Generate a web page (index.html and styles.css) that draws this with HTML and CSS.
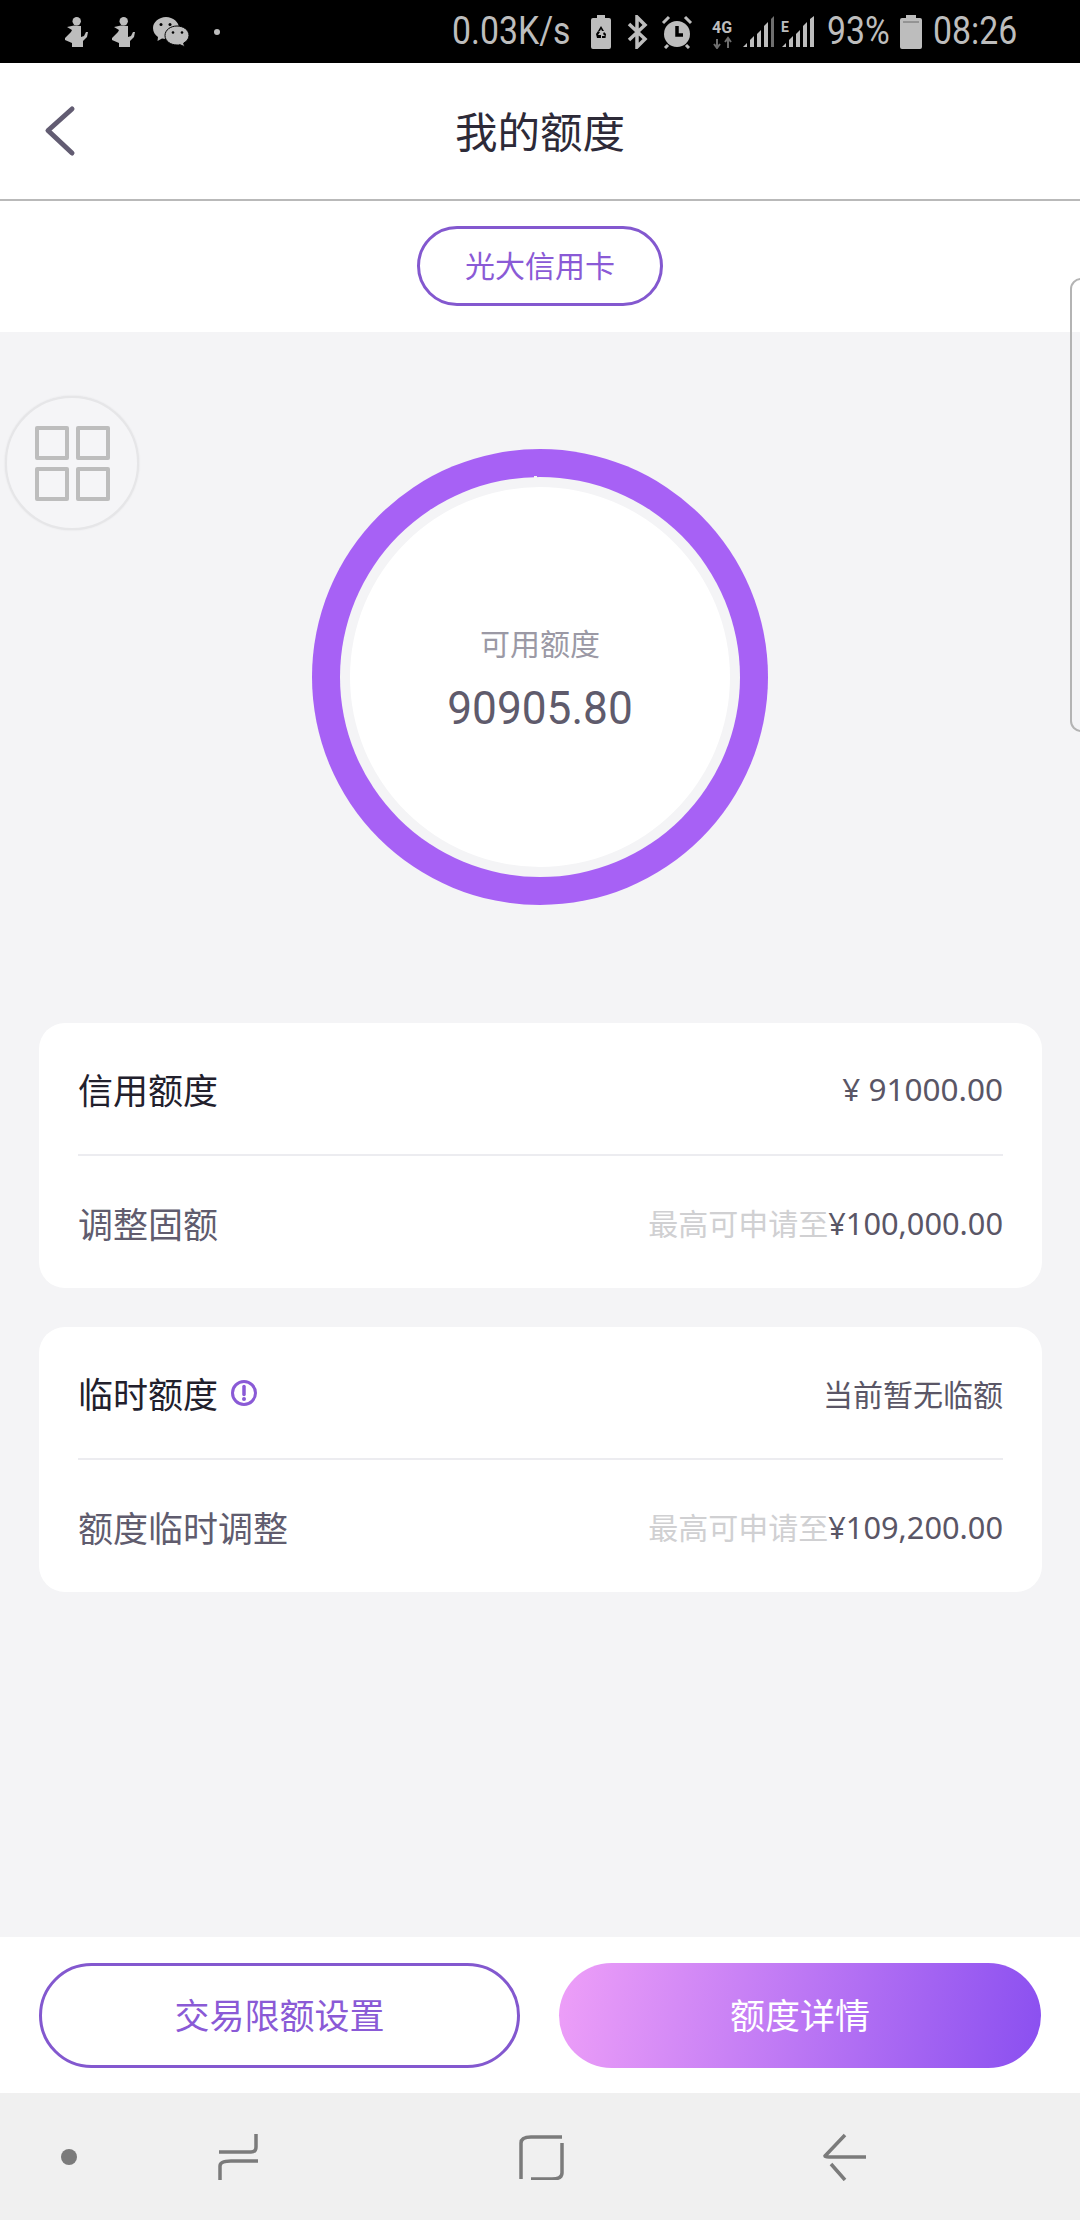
FILE: index.html
```html
<!DOCTYPE html>
<html lang="zh-CN">

<head>
    <meta charset="UTF-8">
    <meta name="viewport" content="width=device-width, initial-scale=1.0">
    <title>我的额度</title>
    <link rel="stylesheet" href="styles.css">
</head>

<body>
    <div id="page">
        <!-- status bar -->
        <div id="status-bar">
            <svg class="st-fig" width="24" height="30" viewBox="0 0 24 30"><circle cx="12.700" cy="4.200" r="4.200"/><path d="M10 8.500 3 10l5 3-1 2-6 6v2l7 3v4h11v-6l4-4 1-5h-2l-2 4-3 1V9Z"/></svg>
            <svg class="st-fig st-fig2" width="24" height="30" viewBox="0 0 24 30"><circle cx="12.700" cy="4.200" r="4.200"/><path d="M10 8.500 3 10l5 3-1 2-6 6v2l7 3v4h11v-6l4-4 1-5h-2l-2 4-3 1V9Z"/></svg>
            <svg class="st-wechat" width="36" height="30" viewBox="0 0 36 30"><path d="M13 0C6 0 0 5 0 11c0 4 2 7 5 9l-.5 4 4.500-2.500c1 .3 2.500.5 4 .5 7 0 13-5 13-11S20 0 13 0Z"/><path d="M24 9c-6.500 0-12 4-12 9.500S17.500 28 24 28c1 0 2 0 3-.3l4.500 2-.8-3.700C33.500 24.500 36 22 36 18.500 36 13 30.500 9 24 9Z" stroke="#000" stroke-width="1"/><g fill="#000"><circle cx="8" cy="7.500" r="1.500"/><circle cx="17" cy="7.500" r="1.500"/><circle cx="20" cy="15.500" r="1.300"/><circle cx="29" cy="15.500" r="1.300"/></g></svg>
            <span class="st-dot"></span>
            <span class="st-text st-speed">0.03K/s</span>
            <svg class="st-saver" width="20" height="34" viewBox="0 0 20 34"><path d="M6 0h8v3h4a2 2 0 0 1 2 2v27a2 2 0 0 1-2 2H2a2 2 0 0 1-2-2V5a2 2 0 0 1 2-2h4Z"/><path d="M10 11l3 5h-2l-1-2-1 2H7ZM5 19l2-3 2 1-2 3h3v3H6ZM15 19l-2-2-1 2 2 2h-3v2h3.500Z" fill="#000"/></svg>
            <svg class="st-bt" width="21" height="34" viewBox="0 0 21 34"><path d="M2 9 18 24 10 32V2l8 8L2 25" fill="none" stroke-width="3.500"/></svg>
            <svg class="st-alarm" width="32" height="34" viewBox="0 0 32 34"><circle cx="16" cy="19" r="13"/><path d="M16 11v9h6" fill="none" stroke="#000" stroke-width="3.500"/><path d="M2 8 8 2M24 2l6 6M7 30l-3 3M25 30l3 3" fill="none" stroke-width="3"/></svg>
            <svg class="st-lte" width="25" height="34" viewBox="0 0 25 34"><text x="1" y="18" class="st-small">4G</text><path d="M6 24v9M3 29l3 4 3-4M17 33v-9M14 27l3-4 3 4" fill="none" stroke="#6e6e6e" stroke-width="2"/></svg>
            <svg class="st-signal" width="31" height="32" viewBox="0 0 31 32"><path d="M0 31 4 27v4ZM7 24l4-4v11H7ZM14 18l4-4v17h-4ZM21 10l4-4v25h-4Z"/><path d="M28 3l3-3v31h-3Z" fill="#6e6e6e"/></svg>
            <svg class="st-signal2" width="33" height="32" viewBox="0 0 33 32"><text x="0" y="16" class="st-small st-e">E</text><path d="M1 31 5 27v4ZM8 24l4-4v11H8ZM15 18l4-4v17h-4ZM22 10l4-4v25h-4ZM29 3l4-3v31h-4Z"/></svg>
            <span class="st-text st-percent">93%</span>
            <svg class="st-battery" width="22" height="34" viewBox="0 0 22 34"><path d="M6 0h10v3h4a2 2 0 0 1 2 2v27a2 2 0 0 1-2 2H2a2 2 0 0 1-2-2V5a2 2 0 0 1 2-2h4Z"/><path d="M3 7h16" stroke="#6a6a6a" stroke-width="1"/></svg>
            <span class="st-text st-time">08:26</span>
        </div>

        <div id="header">
            <svg class="back-icon" width="36" height="52" viewBox="0 0 36 52"><path d="M28 4 4 25.500 28 48" fill="none" stroke="#625c72" stroke-width="5" stroke-linecap="round" stroke-linejoin="round"/></svg>
            <div class="title">我的额度</div>
        </div>

        <div id="card-tab">
            <div class="tab-pill">光大信用卡</div>
        </div>

        <div id="main">
            <div class="float-btn">
                <div class="grid-icon">
                    <span></span><span></span><span></span><span></span>
                </div>
            </div>
            <div class="edge-panel"></div>

            <div class="ring">
                <div class="ring-gap">
                    <div class="ring-inner">
                        <div class="avail-label">可用额度</div>
                        <div class="avail-value">90905.80</div>
                    </div>
                </div>
            </div>

            <div class="card">
                <div class="row">
                    <div class="row-title">信用额度</div>
                    <div class="row-value row-total">¥ 91000.00</div>
                </div>
                <div class="row">
                    <div class="row-sub">调整固额</div>
                    <div class="row-value"><span class="hint">最高可申请至</span>¥100,000.00</div>
                </div>
            </div>

            <div class="card">
                <div class="row">
                    <div class="row-title">临时额度
                        <svg class="info-icon" width="28" height="28" viewBox="0 0 28 28"><circle cx="14" cy="14" r="11.500" fill="none" stroke="#8a5ad6" stroke-width="3"/><path d="M14 7.500v8" stroke="#8a5ad6" stroke-width="3.500" stroke-linecap="round"/><circle cx="14" cy="20" r="2" fill="#8a5ad6"/></svg>
                    </div>
                    <div class="row-value row-cn">当前暂无临额</div>
                </div>
                <div class="row">
                    <div class="row-sub">额度临时调整</div>
                    <div class="row-value"><span class="hint">最高可申请至</span>¥109,200.00</div>
                </div>
            </div>
        </div>

        <div id="actions">
            <div class="btn btn-outline">交易限额设置</div>
            <div class="btn btn-fill">额度详情</div>
        </div>

        <!-- android nav bar -->
        <div id="nav-bar">
            <span class="nav-dot"></span>
            <svg class="nav-recent" width="44" height="50" viewBox="0 0 44 50"><path d="M39 2v13q0 5-5 5H2M41 29H14q-11 0-11 5v14" fill="none" stroke="#7b7b7b" stroke-width="3.500"/></svg>
            <svg class="nav-home" width="45" height="46" viewBox="0 0 45 46"><path d="M43 3H12Q2 3 2 9v36M43 9v30q0 6-10 6H12" fill="none" stroke="#7b7b7b" stroke-width="3.500"/></svg>
            <svg class="nav-back" width="45" height="48" viewBox="0 0 45 48"><path d="M23 2 3 23q0 1 4 1h37M9 31l14 16" fill="none" stroke="#7b7b7b" stroke-width="3.500"/></svg>
        </div>
    </div>
</body>

</html>
```

FILE: styles.css
```css
* {
    box-sizing: border-box;
}

body {
    margin: 0;
    font-family: "Noto Sans", "Noto Sans CJK SC", sans-serif;
    background-color: #f4f4f6;
}

#page {
    display: flex;
    flex-direction: column;
    width: 1080px;
    height: 2220px;
    overflow: hidden;
}

/* status bar */
#status-bar {
    display: flex;
    align-items: center;
    flex: 0 0 63px;
    padding-left: 64px;
    background-color: #000;
    color: #bdbdbd;
    fill: #bdbdbd;
    stroke: #bdbdbd;
}

#status-bar svg {
    stroke-width: 0;
    flex: none;
}

.st-fig2 {
    margin-left: 23px;
}

.st-wechat {
    margin-left: 18px;
}

.st-dot {
    width: 6px;
    height: 6px;
    margin-left: 25px;
    border-radius: 50%;
    background-color: #bdbdbd;
}

.st-text {
    flex: none;
    font-family: Roboto, sans-serif;
    font-size: 38px;
    line-height: 63px;
    transform: scaleX(0.89);
    transform-origin: left center;
}

.st-speed {
    width: 118px;
    margin-left: 232px;
}

.st-saver {
    margin-left: 21px;
}

.st-bt {
    margin-left: 16px;
}

.st-alarm {
    margin-left: 13px;
}

.st-lte {
    margin-left: 18px;
}

.st-signal {
    margin-left: 7px;
}

.st-signal2 {
    margin-left: 7px;
}

.st-small {
    font-family: Roboto, sans-serif;
    font-size: 16px;
    font-weight: 700;
}

.st-e {
    font-size: 14px;
}

.st-percent {
    width: 61px;
    margin-left: 13px;
}

.st-battery {
    margin-left: 12px;
}

.st-time {
    width: 84px;
    margin-left: 11px;
}

/* header */
#header {
    position: relative;
    flex: 0 0 138px;
    display: flex;
    align-items: center;
    justify-content: center;
    padding-bottom: 3px;
    background-color: #fff;
    border-bottom: 2px solid #b9b9b9;
}

.back-icon {
    position: absolute;
    left: 44px;
    top: 42px;
}

.title {
    font-size: 42.500px;
    color: #2d2a38;
}

#card-tab {
    flex: 0 0 131px;
    display: flex;
    justify-content: center;
    padding-top: 25px;
    background-color: #fff;
}

.tab-pill {
    width: 246px;
    height: 80px;
    border: 3px solid #8358cf;
    border-radius: 40px;
    font-size: 30px;
    line-height: 74px;
    text-align: center;
    color: #8a5ad6;
}

/* main area */
#main {
    position: relative;
    flex: 1;
    padding: 117px 38px 0 39px;
    background-color: #f4f4f6;
}

.float-btn {
    position: absolute;
    left: 5px;
    top: 64px;
    width: 134px;
    height: 134px;
    display: flex;
    align-items: center;
    justify-content: center;
    background-color: #f5f5f7;
    border: 2px solid #e6e6e8;
    border-radius: 50%;
    box-shadow: 0 0 2px #dcdcde;
}

.grid-icon {
    display: grid;
    grid-template-columns: repeat(2, 34px);
    grid-template-rows: repeat(2, 34px);
    gap: 7px;
}

.grid-icon span {
    border: 4px solid #bdbdbd;
    border-radius: 2px;
}

.edge-panel {
    position: absolute;
    right: -12px;
    top: -54px;
    width: 22px;
    height: 454px;
    border: 2px solid #b4b4b4;
    border-radius: 14px;
}

.ring {
    position: relative;
    width: 456px;
    height: 456px;
    margin-left: 273px;
    padding: 28px;
    border-radius: 50%;
    background-color: #a761f5;
}

.ring::after {
    content: "";
    position: absolute;
    left: 222px;
    top: 27px;
    width: 3px;
    height: 2px;
    background-color: #f4f4f6;
}

.ring-gap {
    width: 100%;
    height: 100%;
    padding: 10px;
    border-radius: 50%;
    background-color: #f4f4f6;
}

.ring-inner {
    width: 100%;
    height: 100%;
    padding-top: 135px;
    border-radius: 50%;
    background-color: #fff;
    text-align: center;
}

.avail-label {
    font-size: 30px;
    line-height: 44px;
    color: #9b99a5;
}

.avail-value {
    margin-top: 16px;
    font-family: Roboto, sans-serif;
    font-size: 47px;
    line-height: 52px;
    color: #5f5b6c;
    transform: scaleX(0.94);
}

.card {
    width: 1003px;
    height: 265px;
    margin-top: 39px;
    padding: 0 39px;
    background-color: #fff;
    border-radius: 26px;
}

.ring + .card {
    margin-top: 118px;
}

.row {
    display: flex;
    align-items: center;
    justify-content: space-between;
    height: 132px;
}

.row:first-child {
    height: 133px;
    border-bottom: 2px solid #ececf0;
}

.row-title {
    display: flex;
    align-items: center;
    gap: 12px;
    font-size: 35px;
    color: #22202c;
}

.row-sub {
    font-size: 35px;
    color: #605c6e;
}

.row-value {
    font-size: 30.750px;
    color: #5a5666;
}

.row-total {
    font-size: 31.500px;
}

.row-cn {
    font-size: 30px;
}

.hint {
    font-size: 30px;
    color: #d0d0d2;
}

/* bottom buttons */
#actions {
    flex: 0 0 156px;
    display: flex;
    justify-content: space-between;
    padding: 26px 39px 0 39px;
    background-color: #fff;
}

.btn {
    height: 105px;
    border-radius: 53px;
    font-size: 35px;
    text-align: center;
}

.btn-outline {
    width: 481px;
    border: 3px solid #8358cf;
    line-height: 99px;
    color: #8a5ad6;
}

.btn-fill {
    width: 482px;
    line-height: 105px;
    color: #fff;
    background: linear-gradient(100deg, #ee9ff8, #8a4ff0);
}

/* nav bar */
#nav-bar {
    flex: 0 0 127px;
    display: flex;
    align-items: center;
    padding-left: 61px;
    background-color: #f0f0f0;
}

.nav-dot {
    width: 16px;
    height: 16px;
    border-radius: 50%;
    background-color: #7b7b7b;
}

.nav-recent {
    margin-left: 140px;
}

.nav-home {
    margin-left: 258px;
}

.nav-back {
    margin-left: 258px;
}
```
